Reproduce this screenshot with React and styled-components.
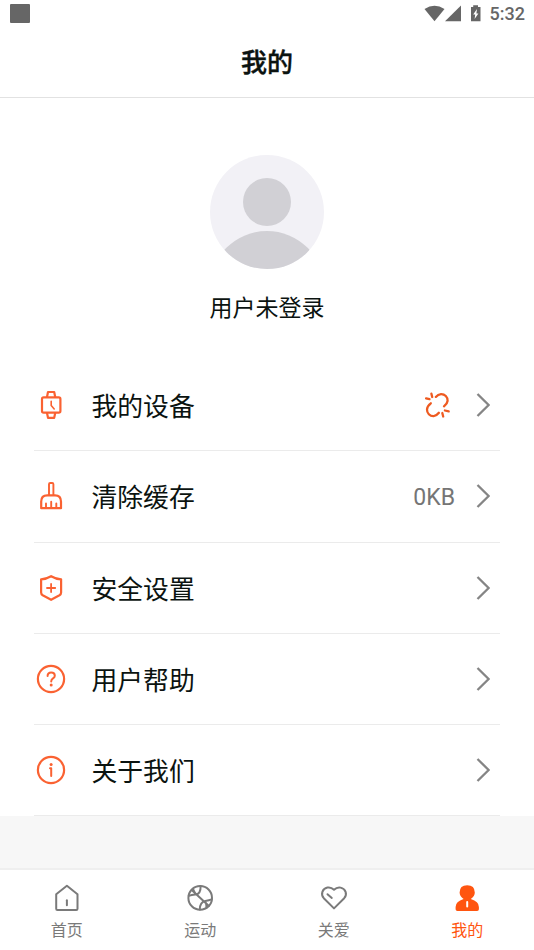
import React from "react";
import styled, { createGlobalStyle } from "styled-components";

const GlobalStyle = createGlobalStyle`
  * {
    box-sizing: border-box;
  }

  body {
    margin: 0;
    background: #fff;
    font-family: Roboto, "Noto Sans CJK SC", sans-serif;
  }
`;

const Screen = styled.div`
  display: flex;
  flex-direction: column;
  height: 950px;
  background: #f7f7f7;
`;

const StatusBar = styled.div`
  display: flex;
  align-items: center;
  justify-content: space-between;
  height: 27px;
  padding: 0 9px 0 10px;
  background: #fff;
  color: #666;
`;

const Notice = styled.div`
  width: 20px;
  height: 19px;
  border-radius: 1px;
  background: #666;
`;

const StatusIcons = styled.div`
  display: flex;
  align-items: center;
`;

const Clock = styled.span`
  margin-left: 7px;
  font-size: 18px;
  font-weight: 500;
  line-height: 27px;
`;

const Header = styled.h1`
  height: 71px;
  margin: 0;
  padding-top: 2px;
  border-bottom: 1px solid #e2e2e2;
  background: #fff;
  color: #0b1310;
  font-size: 26px;
  font-weight: 500;
  line-height: 69px;
  text-align: center;
  -webkit-text-stroke: 0.4px #0b1310;
`;

const Profile = styled.div`
  display: flex;
  flex-direction: column;
  align-items: center;
  height: 262px;
  padding-top: 57px;
  background: #fff;
`;

const UserName = styled.div`
  margin-top: 22px;
  color: #0b1310;
  font-size: 23px;
  line-height: 34px;
`;

const Menu = styled.div`
  padding: 0 34px;
  background: #fff;
`;

const Row = styled.div`
  display: flex;
  align-items: center;
  height: 91.3px;
  padding-right: 10px;
  border-bottom: 1.5px solid #ebebeb;
  cursor: pointer;
`;

const Label = styled.span`
  flex: 1;
  margin-left: 23.5px;
  padding-top: 4px;
  color: #0b1310;
  font-size: 25.8px;
  line-height: 38px;
`;

const Value = styled.span`
  margin-right: 21px;
  padding-top: 3px;
  color: #757575;
  font-size: 23px;
`;

const Unlink = styled.svg`
  margin-right: 25px;
`;

const TabBar = styled.nav`
  display: flex;
  height: 82px;
  margin-top: auto;
  border-top: 2px solid #efefef;
  background: #fff;
`;

const Tab = styled.div`
  display: flex;
  flex: 1;
  flex-direction: column;
  align-items: center;
  padding-top: 14px;
  color: ${({ $active }) => ($active ? "#ff5510" : "#7a7a7a")};
  font-size: 16px;
  line-height: 24px;
  cursor: pointer;

  svg {
    margin-bottom: 7px;
  }
`;

const Line = ({ size = 34, children }) => (
  <svg
    width={size}
    height={size}
    viewBox={`0 0 ${size} ${size}`}
    fill="none"
    stroke="#fa6232"
    strokeWidth="2.2"
    strokeLinecap="round"
    strokeLinejoin="round"
  >
    {children}
  </svg>
);

const WatchIcon = () => (
  <Line>
    <rect x="8" y="9.3" width="18.4" height="15.4" rx="1.6" />
    <path d="M13 9 14 4h6.2l1 5M13 25l1 4.8h6.2l1-4.8" />
    <path d="M17.2 13.2v4.2l3 3.6" strokeWidth="1.6" />
  </Line>
);

const BroomIcon = () => (
  <Line>
    <path d="M15 16V5.2q0-1.2 1.2-1.2h2q1.2 0 1.2 1.2V16" strokeWidth="1.9" />
    <path d="M7.2 29.2v-6.6q0-6.3 6-6.3h7.8q6 0 6 6.3v6.6z" />
    <path d="M12 24.5v4.2M17.2 22.8v5.9M22.3 24.5v4.2" strokeWidth="1.9" />
  </Line>
);

const ShieldIcon = () => (
  <Line>
    <path d="M17.1 5.2q4.7 2.8 10 3.1v13.2q0 1.8-1.6 2.8l-8.4 4.5-8.4-4.5q-1.6-1-1.6-2.8V8.3q5.3-.3 10-3.1z" />
    <path d="M17.1 12.9v8.2M13 17h8.2" strokeWidth="1.8" />
  </Line>
);

const HelpIcon = () => (
  <Line>
    <circle cx="17" cy="17" r="13.1" />
    <path
      d="M13.6 14.1q0-3.5 3.6-3.5t3.6 3.2q0 1.5-1.8 2.6-1.8 1.2-1.8 3"
      strokeWidth="2"
    />
    <circle cx="17.2" cy="22.9" r="1.5" fill="#fa6232" stroke="none" />
  </Line>
);

const InfoIcon = () => (
  <Line>
    <circle cx="17" cy="17" r="13.1" />
    <path d="M16 15.3h1.2V23" strokeWidth="2" />
    <circle cx="17.1" cy="11.4" r="1.5" fill="#fa6232" stroke="none" />
  </Line>
);

const UnlinkIcon = () => (
  <Unlink
    width="27"
    height="27"
    viewBox="0 0 27 27"
    fill="none"
    stroke="#ee5a20"
    strokeWidth="2.3"
    strokeLinecap="round"
  >
    <path d="M11.8 4.9Q14 2.3 17 2.1a6.4 6.4 0 0 1 6.6 6.8q-.2 2.6-3.6 5.4" />
    <path d="M6.8 11.3q-3.6 2.8-3.8 6.1a6.4 6.4 0 0 0 6.6 6.7q2.9-.2 5.3-3.3" />
    <path d="M2.1 6.3l3.4.9M7.4 1.7l.8 3.3M20.9 18.5l3.8.9M18.3 21l.9 3.5" />
  </Unlink>
);

const Chevron = () => (
  <svg width="14" height="24" viewBox="0 0 14 24" fill="none">
    <path d="M1.5 1 12.6 12 1.5 23" stroke="#858585" strokeWidth="2.3" />
  </svg>
);

const Avatar = () => (
  <svg width="115" height="115" viewBox="0 0 115 115">
    <defs>
      <clipPath id="avatar">
        <circle cx="57" cy="57" r="57" />
      </clipPath>
    </defs>
    <circle cx="57" cy="57" r="57" fill="#f2f1f6" />
    <g clipPath="url(#avatar)" fill="#d1d0d5">
      <circle cx="57" cy="47" r="24" />
      <circle cx="57" cy="133.5" r="57.5" />
    </g>
  </svg>
);

const TabSvg = ({ children }) => (
  <svg
    width="28"
    height="28"
    viewBox="0 0 28 28"
    fill="none"
    stroke="currentColor"
    strokeWidth="2"
    strokeLinecap="round"
    strokeLinejoin="round"
  >
    {children}
  </svg>
);

const HomeIcon = () => (
  <TabSvg>
    <path d="M3.2 10.2 13.9 1.8l10.6 8.4v14.6q0 1.2-1.2 1.2H4.4q-1.2 0-1.2-1.2z" />
    <path d="M13.9 16.3v4.9" />
  </TabSvg>
);

const BallIcon = () => (
  <TabSvg>
    <circle cx="14.2" cy="13.9" r="11.8" />
    <path d="M5.7 6 22.9 21.9M14.6 2.3Q14.9 10.3 9.2 10.5 5.5 10.9 2.7 11.9M13.8 25.5Q13.9 18 19.4 17 23.1 16.4 25.6 15.4M9.7 9.9Q7.7 7.2 7 4.9M19.4 17.5Q20.5 20.2 20.4 23.3" />
  </TabSvg>
);

const HeartIcon = () => (
  <TabSvg>
    <path d="M14 5.8q3.1-3 6.6-2.2 3.8.8 5 4.2 1.2 3.4-1.4 6.4L14 24.4 3.8 14.2Q1.2 11.2 2.4 7.8 3.6 4.4 7.4 3.6 10.9 2.8 14 5.8z" />
    <path d="M7.5 10.2l4.3 3.7" />
  </TabSvg>
);

const UserIcon = () => (
  <TabSvg>
    <path
      d="M10.6 15Q6.6 12.4 6.6 8.6 6.6 1.2 14.2 1.2t7.6 7.4q0 3.8-4 6.4 8.1 2.4 8.1 7.9v2.4q0 1.8-1.8 1.8H4.4q-1.8 0-1.8-1.8v-2.4q0-5.5 8-7.9z"
      fill="currentColor"
      stroke="none"
    />
    <path d="M14.2 18v4.4" stroke="#fff" />
  </TabSvg>
);

const items = [
  { label: "我的设备", icon: <WatchIcon />, extra: <UnlinkIcon /> },
  { label: "清除缓存", icon: <BroomIcon />, extra: <Value>0KB</Value> },
  { label: "安全设置", icon: <ShieldIcon /> },
  { label: "用户帮助", icon: <HelpIcon /> },
  { label: "关于我们", icon: <InfoIcon /> },
];

const tabs = [
  { label: "首页", icon: <HomeIcon /> },
  { label: "运动", icon: <BallIcon /> },
  { label: "关爱", icon: <HeartIcon /> },
  { label: "我的", icon: <UserIcon />, active: true },
];

const App = () => {
  return (
    <Screen>
      <GlobalStyle />
      <StatusBar>
        <Notice />
        <StatusIcons>
          <svg width="59" height="20" viewBox="0 0 59 20" fill="#666">
            <path d="M.5 5Q10.5 -1.3 20.5 5L10.5 17.3z" />
            <path d="M37 1.5v15.8H21z" />
            <path d="M47 3h2.2V1.2h4.8v1.8h2.5v14.3H47z" />
            <path d="M53 5 49.2 10.5h2l-.6 4.6L54.4 9.5h-2z" fill="#fff" />
          </svg>
          <Clock>5:32</Clock>
        </StatusIcons>
      </StatusBar>
      <Header>我的</Header>
      <Profile>
        <Avatar />
        <UserName>用户未登录</UserName>
      </Profile>
      <Menu>
        {items.map((item) => (
          <Row key={item.label}>
            {item.icon}
            <Label>{item.label}</Label>
            {item.extra}
            <Chevron />
          </Row>
        ))}
      </Menu>
      <TabBar>
        {tabs.map((tab) => (
          <Tab key={tab.label} $active={tab.active}>
            {tab.icon}
            {tab.label}
          </Tab>
        ))}
      </TabBar>
    </Screen>
  );
};

export default App;
